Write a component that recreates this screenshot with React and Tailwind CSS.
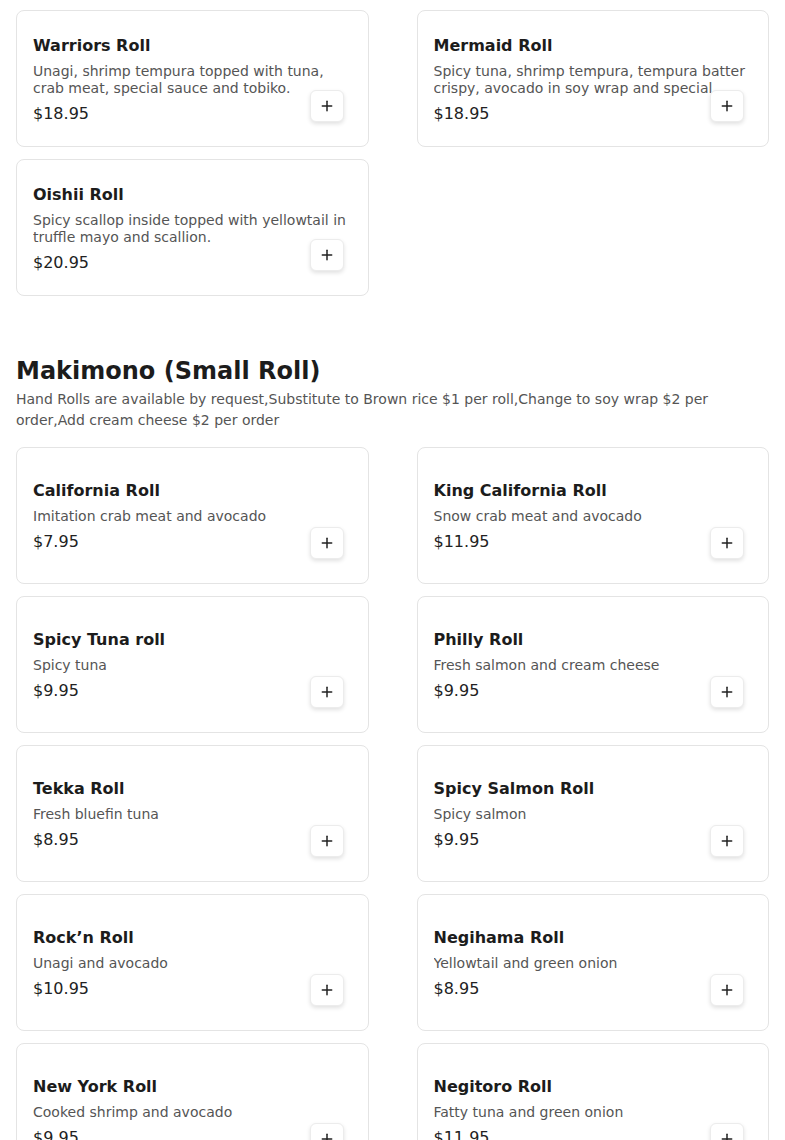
import { Plus } from "lucide-react";

const specialRolls = [
  {
    name: "Warriors Roll",
    desc: "Unagi, shrimp tempura topped with tuna, crab meat, special sauce and tobiko.",
    price: "$18.95",
  },
  {
    name: "Mermaid Roll",
    desc: "Spicy tuna, shrimp tempura, tempura batter crispy, avocado in soy wrap and special sauce.",
    price: "$18.95",
  },
  {
    name: "Oishii Roll",
    desc: "Spicy scallop inside topped with yellowtail in truffle mayo and scallion.",
    price: "$20.95",
  },
];

const makimono = [
  { name: "California Roll", desc: "Imitation crab meat and avocado", price: "$7.95" },
  { name: "King California Roll", desc: "Snow crab meat and avocado", price: "$11.95" },
  { name: "Spicy Tuna roll", desc: "Spicy tuna", price: "$9.95" },
  { name: "Philly Roll", desc: "Fresh salmon and cream cheese", price: "$9.95" },
  { name: "Tekka Roll", desc: "Fresh bluefin tuna", price: "$8.95" },
  { name: "Spicy Salmon Roll", desc: "Spicy salmon", price: "$9.95" },
  { name: "Rock’n Roll", desc: "Unagi and avocado", price: "$10.95" },
  { name: "Negihama Roll", desc: "Yellowtail and green onion", price: "$8.95" },
  { name: "New York Roll", desc: "Cooked shrimp and avocado", price: "$9.95" },
  { name: "Negitoro Roll", desc: "Fatty tuna and green onion", price: "$11.95" },
];

function MenuCard({ item }) {
  return (
    <div className="relative h-[137px] rounded-lg border border-[#e4e4e4] bg-white px-4 pt-[2px] flex flex-col justify-center">
      <h3 className="text-base leading-6 font-bold text-[#1c1c1c]">{item.name}</h3>
      <p className="mt-[5px] max-h-[34px] overflow-hidden text-sm leading-[17px] text-[#555]">
        {item.desc}
      </p>
      <div className="mt-[5px] text-base leading-6 text-[#222]">{item.price}</div>
      <button className="absolute right-6 bottom-6 flex h-8 w-[34px] items-center justify-center rounded-md border border-[#ececec] bg-white shadow-[0_2px_4px_rgba(0,0,0,0.12)]">
        <Plus size={16} strokeWidth={2.25} className="text-[#222]" />
      </button>
    </div>
  );
}

export default function App() {
  return (
    <div className="min-h-screen bg-white px-4 pt-[10px] pb-10 font-['DejaVu_Sans',sans-serif]">
      <section>
        <div className="grid grid-cols-2 gap-x-12 gap-y-3">
          {specialRolls.map((item) => (
            <MenuCard key={item.name} item={item} />
          ))}
        </div>
      </section>

      <section className="mt-[59px]">
        <h2 className="text-2xl leading-8 font-bold text-[#1c1c1c]">Makimono (Small Roll)</h2>
        <p className="mt-[2px] text-sm leading-[21px] text-[#555]">
          Hand Rolls are available by request,Substitute to Brown rice $1 per roll,Change to soy wrap $2 per
          order,Add cream cheese $2 per order
        </p>
        <div className="mt-4 grid grid-cols-2 gap-x-12 gap-y-3">
          {makimono.map((item) => (
            <MenuCard key={item.name} item={item} />
          ))}
        </div>
      </section>
    </div>
  );
}
